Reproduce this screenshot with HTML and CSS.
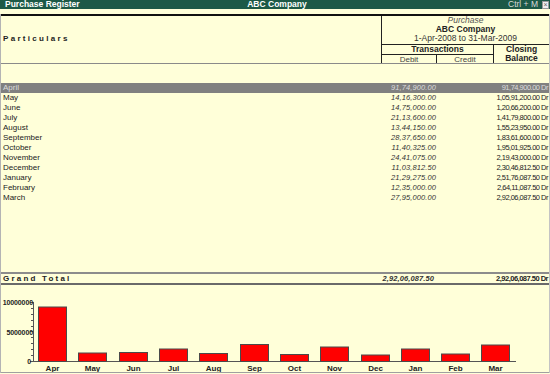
FILE: index.html
```html
<!DOCTYPE html>
<html lang="en">
<head>
    <meta charset="UTF-8">
    <title>Purchase Register</title>
    <link rel="stylesheet" href="styles.css">
</head>
<body>
    <div class="titlebar">
        <span class="title-left">Purchase Register</span>
        <span class="title-mid">ABC Company</span>
        <span class="title-right">Ctrl + M <span class="close">&times;</span></span>
    </div>
    <div class="spacer"></div>

    <div class="main">
        <div class="head">
            <div class="particulars">Particulars</div>
            <div class="head-right">
                <div class="title-block">
                    <div class="it">Purchase</div>
                    <div class="b">ABC Company</div>
                    <div>1-Apr-2008 to 31-Mar-2009</div>
                </div>
                <div class="cols">
                    <div class="trans">
                        <div class="trans-label">Transactions</div>
                        <div class="dc">
                            <span class="debit-h">Debit</span>
                            <span class="credit-h">Credit</span>
                        </div>
                    </div>
                    <div class="closing">Closing<br>Balance</div>
                </div>
            </div>
        </div>

        <div class="list">
            <div class="row active"><span class="name">April</span><span class="debit">91,74,900.00</span><span></span><span class="bal">91,74,900.00 Dr</span></div>
            <div class="row"><span class="name">May</span><span class="debit">14,16,300.00</span><span></span><span class="bal">1,05,91,200.00 Dr</span></div>
            <div class="row"><span class="name">June</span><span class="debit">14,75,000.00</span><span></span><span class="bal">1,20,66,200.00 Dr</span></div>
            <div class="row"><span class="name">July</span><span class="debit">21,13,600.00</span><span></span><span class="bal">1,41,79,800.00 Dr</span></div>
            <div class="row"><span class="name">August</span><span class="debit">13,44,150.00</span><span></span><span class="bal">1,55,23,950.00 Dr</span></div>
            <div class="row"><span class="name">September</span><span class="debit">28,37,650.00</span><span></span><span class="bal">1,83,61,600.00 Dr</span></div>
            <div class="row"><span class="name">October</span><span class="debit">11,40,325.00</span><span></span><span class="bal">1,95,01,925.00 Dr</span></div>
            <div class="row"><span class="name">November</span><span class="debit">24,41,075.00</span><span></span><span class="bal">2,19,43,000.00 Dr</span></div>
            <div class="row"><span class="name">December</span><span class="debit">11,03,812.50</span><span></span><span class="bal">2,30,46,812.50 Dr</span></div>
            <div class="row"><span class="name">January</span><span class="debit">21,29,275.00</span><span></span><span class="bal">2,51,76,087.50 Dr</span></div>
            <div class="row"><span class="name">February</span><span class="debit">12,35,000.00</span><span></span><span class="bal">2,64,11,087.50 Dr</span></div>
            <div class="row"><span class="name">March</span><span class="debit">27,95,000.00</span><span></span><span class="bal">2,92,06,087.50 Dr</span></div>
        </div>

        <div class="row total">
            <span class="name">Grand Total</span>
            <span class="debit">2,92,06,087.50</span>
            <span></span>
            <span class="bal">2,92,06,087.50 Dr</span>
        </div>

        <div class="chart">
            <svg viewBox="1 285 548 87" width="548" height="87">
                <g class="ticks" stroke="#555" stroke-width="1">
                    <line x1="33.5" y1="302" x2="33.5" y2="361"/>
                    <line x1="30" y1="302.5" x2="33" y2="302.5"/>
                    <line x1="31" y1="308.5" x2="33" y2="308.5"/>
                    <line x1="31" y1="314.5" x2="33" y2="314.5"/>
                    <line x1="31" y1="320.5" x2="33" y2="320.5"/>
                    <line x1="31" y1="326.5" x2="33" y2="326.5"/>
                    <line x1="30" y1="331.5" x2="33" y2="331.5"/>
                    <line x1="31" y1="337.5" x2="33" y2="337.5"/>
                    <line x1="31" y1="343.5" x2="33" y2="343.5"/>
                    <line x1="31" y1="349.5" x2="33" y2="349.5"/>
                    <line x1="31" y1="355.5" x2="33" y2="355.5"/>
                    <line x1="30" y1="361.5" x2="516" y2="361.5"/>
                </g>
                <g class="ylabels">
                    <text x="33" y="305">10000000</text>
                    <text x="33" y="334.5">5000000</text>
                    <text x="31" y="364">0</text>
                </g>
                <g class="bars" fill="#ff0000" stroke="#4a4a4a" stroke-width="1">
                    <rect x="38.5" y="307" width="28" height="54.5"/>
                    <rect x="78.5" y="353" width="28" height="8.5"/>
                    <rect x="119.5" y="352.5" width="28" height="9"/>
                    <rect x="159.5" y="349" width="28" height="12.5"/>
                    <rect x="199.5" y="353.5" width="28" height="8"/>
                    <rect x="240.5" y="344.5" width="28" height="17"/>
                    <rect x="280.5" y="354.5" width="28" height="7"/>
                    <rect x="320.5" y="347" width="28" height="14.5"/>
                    <rect x="361.5" y="355" width="28" height="6.5"/>
                    <rect x="401.5" y="349" width="28" height="12.5"/>
                    <rect x="441.5" y="354" width="28" height="7.5"/>
                    <rect x="481.5" y="345" width="28" height="16.5"/>
                </g>
                <g class="xlabels">
                    <text x="52.5" y="371">Apr</text>
                    <text x="92.5" y="371">May</text>
                    <text x="133.5" y="371">Jun</text>
                    <text x="173.5" y="371">Jul</text>
                    <text x="213.5" y="371">Aug</text>
                    <text x="254.5" y="371">Sep</text>
                    <text x="294.5" y="371">Oct</text>
                    <text x="334.5" y="371">Nov</text>
                    <text x="375.5" y="371">Dec</text>
                    <text x="415.5" y="371">Jan</text>
                    <text x="455.5" y="371">Feb</text>
                    <text x="495.5" y="371">Mar</text>
                </g>
            </svg>
        </div>
    </div>
</body>
</html>
```

FILE: styles.css
```css
body {
    margin: 0;
    width: 550px;
    height: 374px;
    overflow: hidden;
    font-family: "Liberation Sans", Arial, sans-serif;
    background-color: #ffffd9;
    color: #222;
}

.titlebar {
    height: 9px;
    background-color: #1d5947;
    color: #fff;
    display: grid;
    grid-template-columns: 1fr auto 1fr;
    align-items: center;
    padding: 0 1px 0 5px;
    font-size: 8.5px;
    line-height: 9px;
}
.title-left,
.title-mid {
    font-weight: bold;
}
.title-right {
    justify-self: end;
    display: flex;
    align-items: center;
    gap: 4px;
    color: #d8d8d8;
}
.close {
    width: 5px;
    height: 6px;
    background-color: #f0f0f0;
    border: 1px solid #999;
    color: #666;
    font-size: 7px;
    line-height: 6px;
    text-align: center;
}

.spacer {
    height: 5px;
}

.main {
    border-left: 1px solid #b4b4b4;
    border-right: 1px solid #c4c4c4;
}

/* header */
.head {
    display: grid;
    grid-template-columns: 380px 1fr;
    height: 47px;
    border-top: 2px solid #111;
    border-bottom: 1px solid #8a8a8a;
}
.particulars {
    align-self: center;
    padding-left: 2px;
    font-size: 8px;
    font-weight: bold;
    letter-spacing: 2.3px;
    margin-top: -3px;
}
.head-right {
    border-left: 1px solid #222;
    display: flex;
    flex-direction: column;
}
.title-block {
    height: 28px;
    border-bottom: 1px solid #222;
    text-align: center;
    font-size: 8.5px;
    line-height: 9px;
    color: #333;
}
.title-block .it {
    font-style: italic;
    color: #555;
}
.title-block .b {
    font-weight: bold;
    color: #222;
}
.cols {
    display: flex;
    height: 18px;
}
.trans {
    width: 111px;
    border-right: 1px solid #222;
}
.trans-label {
    height: 9px;
    line-height: 9px;
    border-bottom: 1px solid #222;
    text-align: center;
    font-size: 8.5px;
    font-weight: bold;
}
.dc {
    display: flex;
    height: 8px;
    font-size: 8px;
    line-height: 9px;
    color: #444;
}
.debit-h {
    width: 54px;
    border-right: 1px solid #222;
    text-align: center;
}
.credit-h {
    flex: 1;
    text-align: center;
}
.closing {
    flex: 1;
    text-align: center;
    font-size: 8.5px;
    font-weight: bold;
    line-height: 9px;
}

/* rows */
.list {
    height: 208px;
    padding-top: 19px;
    box-sizing: border-box;
}
.row {
    display: grid;
    grid-template-columns: 380px 55px 57px 1fr;
    height: 10px;
    line-height: 10px;
    font-size: 8px;
    color: #222;
    white-space: nowrap;
}
.row .name {
    padding-left: 2px;
}
.row .debit {
    text-align: right;
    font-style: italic;
    font-size: 7.5px;
    letter-spacing: 0.1px;
    color: #333;
}
.row .bal {
    text-align: right;
    padding-right: 1px;
    font-size: 7.5px;
    letter-spacing: -0.5px;
}
.row.active {
    background-color: #808080;
}
.row.active span {
    color: #dcdcdc;
}

.total {
    height: 9px;
    line-height: 9px;
    border-top: 2px solid #8c8c8c;
    border-bottom: 2px solid #6a6a6a;
}
.total .name {
    font-weight: bold;
    letter-spacing: 2.2px;
}
.total .debit {
    font-weight: bold;
    padding-right: 2px;
}
.total .bal {
    font-weight: bold;
}

/* chart */
.chart {
    height: 87px;
    border-bottom: 1px solid #a0a0a0;
}
.chart svg {
    display: block;
}
.ylabels text {
    font-family: "Liberation Sans", Arial, sans-serif;
    font-size: 7px;
    font-weight: bold;
    letter-spacing: -0.1px;
    text-anchor: end;
    fill: #222;
}
.xlabels text {
    font-family: "Liberation Sans", Arial, sans-serif;
    font-size: 8px;
    font-weight: bold;
    text-anchor: middle;
    fill: #222;
}
```
